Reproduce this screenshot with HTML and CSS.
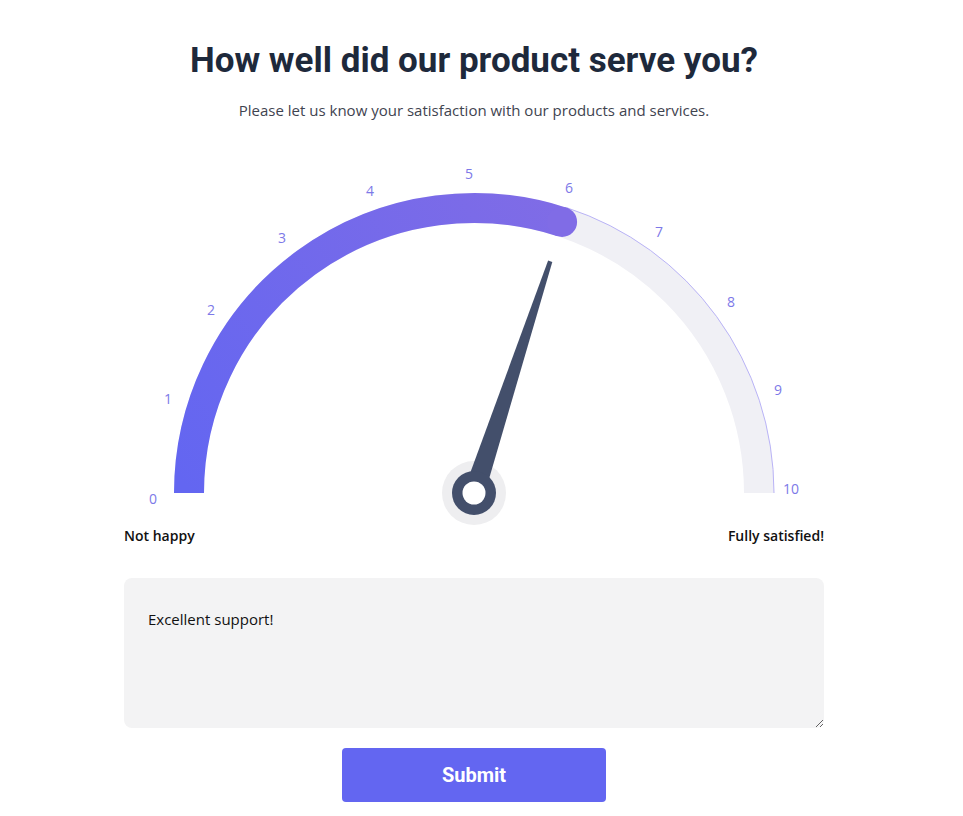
FILE: index.html
```html
<!DOCTYPE html>
<html lang="en">
<head>
<meta charset="utf-8">
<title>Satisfaction survey</title>
<link rel="stylesheet" href="styles.css">
</head>
<body>
<main class="page">
  <h1 class="title">How well did our product serve you?</h1>
  <p class="subtitle">Please let us know your satisfaction with our products and services.</p>
  <div class="panel">
    <svg class="gauge" width="700" height="371" viewBox="0 0 700 371" aria-label="Satisfaction 6 of 10">
      <defs>
        <linearGradient id="prog" gradientUnits="userSpaceOnUse" x1="65" y1="338" x2="450" y2="60">
          <stop offset="0" stop-color="#6366f1"/>
          <stop offset="1" stop-color="#806ce6"/>
        </linearGradient>
      </defs>
      <path d="M65 338 A285 285 0 0 1 635 338" fill="none" stroke="#f0f0f5" stroke-width="30"/>
      <path d="M442.7 52.7 A300 300 0 0 1 650 338" fill="none" stroke="#b9b3f6" stroke-width="1"/>
      <path d="M65 338 A285 285 0 0 1 438.07 66.95" fill="none" stroke="url(#prog)" stroke-width="30"/>
      <circle cx="438.07" cy="66.95" r="15" fill="#806ce6"/>
      <g class="ticks">
        <text x="29" y="343">0</text>
        <text x="44" y="243">1</text>
        <text x="87" y="154">2</text>
        <text x="158" y="82">3</text>
        <text x="246" y="35">4</text>
        <text x="345" y="18">5</text>
        <text x="445" y="32">6</text>
        <text x="535" y="76">7</text>
        <text x="607" y="146">8</text>
        <text x="654" y="234">9</text>
        <text x="667" y="333">10</text>
      </g>
      <circle cx="350" cy="338" r="32" fill="#eeeef0"/>
      <g transform="translate(350 338) rotate(18.2)">
        <polygon points="-10.5,0 10.5,0 2.2,-244 -2.2,-244" fill="#434f6b"/>
      </g>
      <circle cx="350" cy="338" r="22" fill="#434f6b"/>
      <circle cx="350" cy="338" r="11.5" fill="#ffffff"/>
    </svg>
    <div class="ends">
      <span>Not happy</span>
      <span>Fully satisfied!</span>
    </div>
    <textarea class="comment">Excellent support!</textarea>
    <button class="submit" type="button">Submit</button>
  </div>
</main>
</body>
</html>
```

FILE: styles.css
```css
* { box-sizing: border-box; }
html, body { margin: 0; padding: 0; background: #ffffff; }
body { font-family: "Open Sans", "Noto Sans", sans-serif; }
.page {
  width: 948px;
  display: flex;
  flex-direction: column;
  align-items: center;
  padding-top: 39px;
}
.title {
  margin: 0;
  font-family: Roboto, "Liberation Sans", sans-serif;
  font-weight: 700;
  font-size: 35px;
  line-height: 44px;
  color: #1e293b;
}
.subtitle {
  margin: 16px 0 0;
  font-size: 15px;
  line-height: 22px;
  color: #3f4450;
}
.panel {
  width: 700px;
  margin-top: 34px;
  display: flex;
  flex-direction: column;
  align-items: center;
}
.gauge { display: block; }
.ticks text {
  font-family: "Open Sans", "Noto Sans", sans-serif;
  font-size: 14px;
  fill: #7d79e8;
  text-anchor: middle;
  dominant-baseline: central;
}
.ends {
  width: 100%;
  display: flex;
  justify-content: space-between;
  font-size: 14px;
  font-weight: 600;
  line-height: 20px;
  color: #111111;
}
.comment {
  display: block;
  width: 700px;
  height: 150px;
  margin-top: 32px;
  padding: 30px 24px;
  border: none;
  border-radius: 8px;
  background: #f3f3f4;
  font-family: "Open Sans", "Noto Sans", sans-serif;
  font-size: 15px;
  line-height: 22px;
  color: #111111;
  outline: none;
}
.submit {
  margin-top: 20px;
  width: 264px;
  height: 54px;
  border: none;
  border-radius: 4px;
  background: #6366f1;
  color: #ffffff;
  font-family: Roboto, "Liberation Sans", sans-serif;
  font-weight: 700;
  font-size: 20px;
}
```
